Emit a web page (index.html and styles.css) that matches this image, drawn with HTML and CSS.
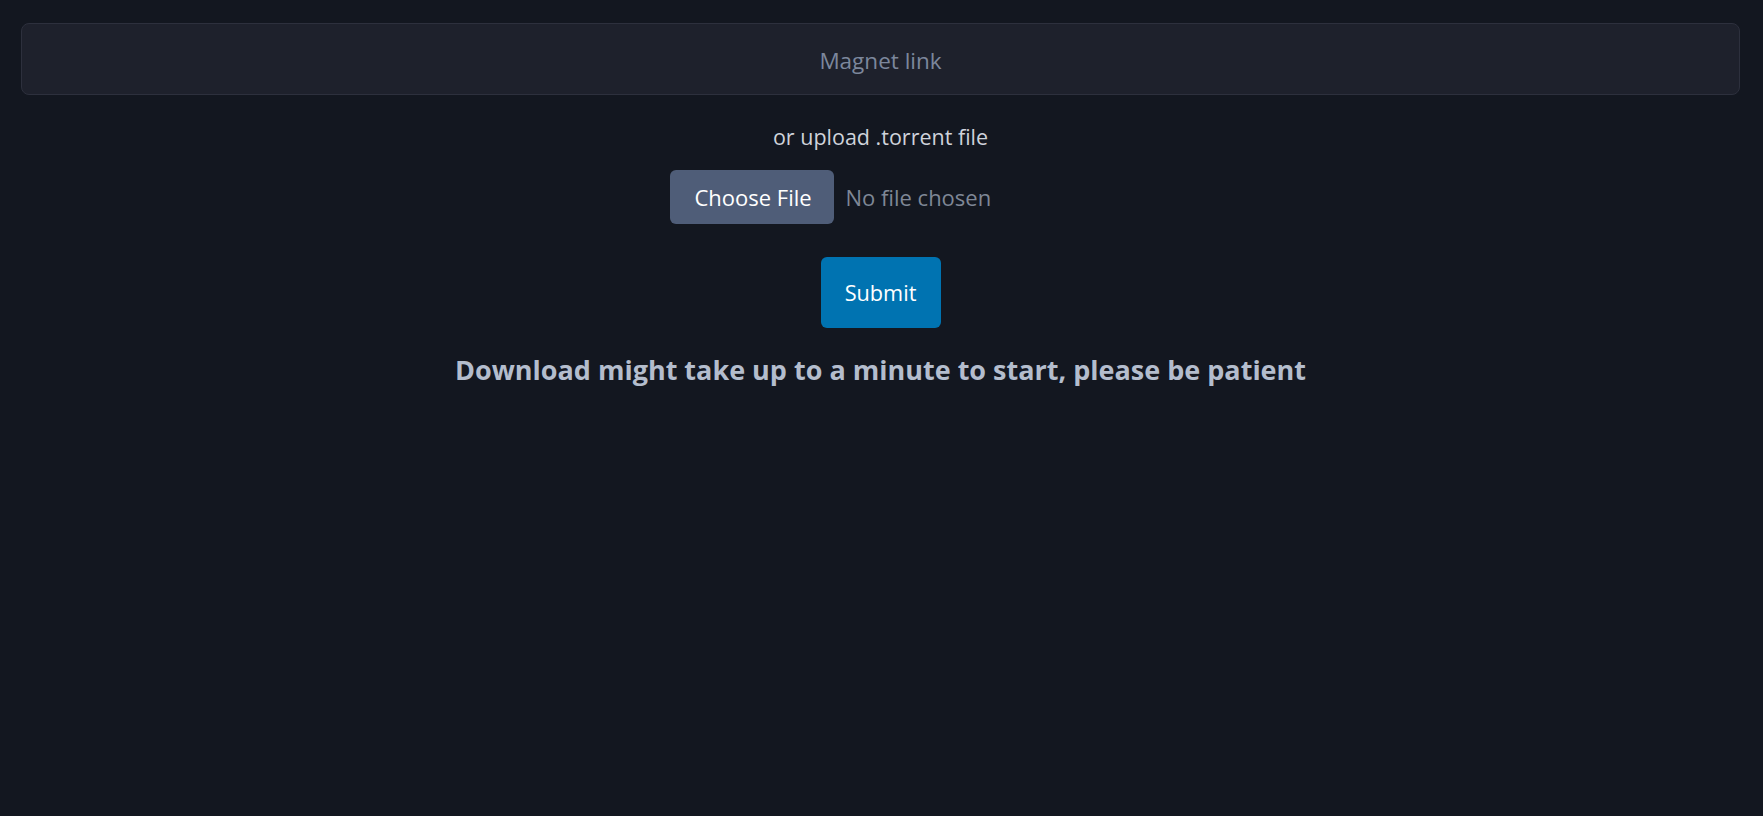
FILE: index.html
```html
<!DOCTYPE html>
<html lang="en">
<head>
<meta charset="utf-8">
<title>Torrent download</title>
<link rel="stylesheet" href="styles.css">
</head>
<body>
<main class="page">
  <form class="form">
    <input class="magnet" type="text" placeholder="Magnet link">
    <p class="or">or upload .torrent file</p>
    <div class="file-row">
      <span class="file-btn">Choose File</span>
      <span class="file-name">No file chosen</span>
    </div>
    <button class="submit" type="button">Submit</button>
  </form>
  <h2 class="notice">Download might take up to a minute to start, please be patient</h2>
</main>
</body>
</html>
```
FILE: styles.css
```css
html, body {
  margin: 0;
  padding: 0;
  background: #131720;
  height: 100%;
}
body {
  font-family: "Open Sans", "Noto Sans", sans-serif;
  color: #cfd3db;
}
.page {
  padding: 23px 23px 0 21px;
}
.form {
  display: flex;
  flex-direction: column;
  align-items: center;
  margin: 0;
}
.magnet {
  box-sizing: border-box;
  width: 100%;
  height: 72px;
  background: #1e212c;
  border: 1px solid #2d303d;
  border-radius: 8px;
  text-align: center;
  font-family: inherit;
  font-size: 22.5px;
  color: #cfd3db;
  outline: none;
  padding: 3px 0 0;
}
.magnet::placeholder {
  color: #7c879c;
}
.or {
  margin: 27px 0 0;
  font-size: 21.5px;
  line-height: 30px;
  color: #cfd3db;
}
.file-row {
  margin-top: 18px;
  width: 424px;
  display: flex;
  align-items: center;
  gap: 12px;
  padding-left: 2px;
}
.file-btn {
  box-sizing: border-box;
  width: 164px;
  height: 54px;
  display: flex;
  align-items: center;
  justify-content: center;
  padding-left: 3px;
  background: #4f5d78;
  border-radius: 6px;
  color: #ffffff;
  font-size: 22px;
}
.file-name {
  font-size: 22px;
  color: #7f8796;
}
.submit {
  margin-top: 33px;
  width: 120px;
  height: 71px;
  background: #0073b1;
  border: none;
  border-radius: 6px;
  color: #ffffff;
  font-family: inherit;
  font-size: 21.7px;
  cursor: pointer;
}
.notice {
  margin: 24px 0 0;
  text-align: center;
  font-size: 27px;
  line-height: 36px;
  font-weight: 700;
  color: #b4bdcd;
}
```
